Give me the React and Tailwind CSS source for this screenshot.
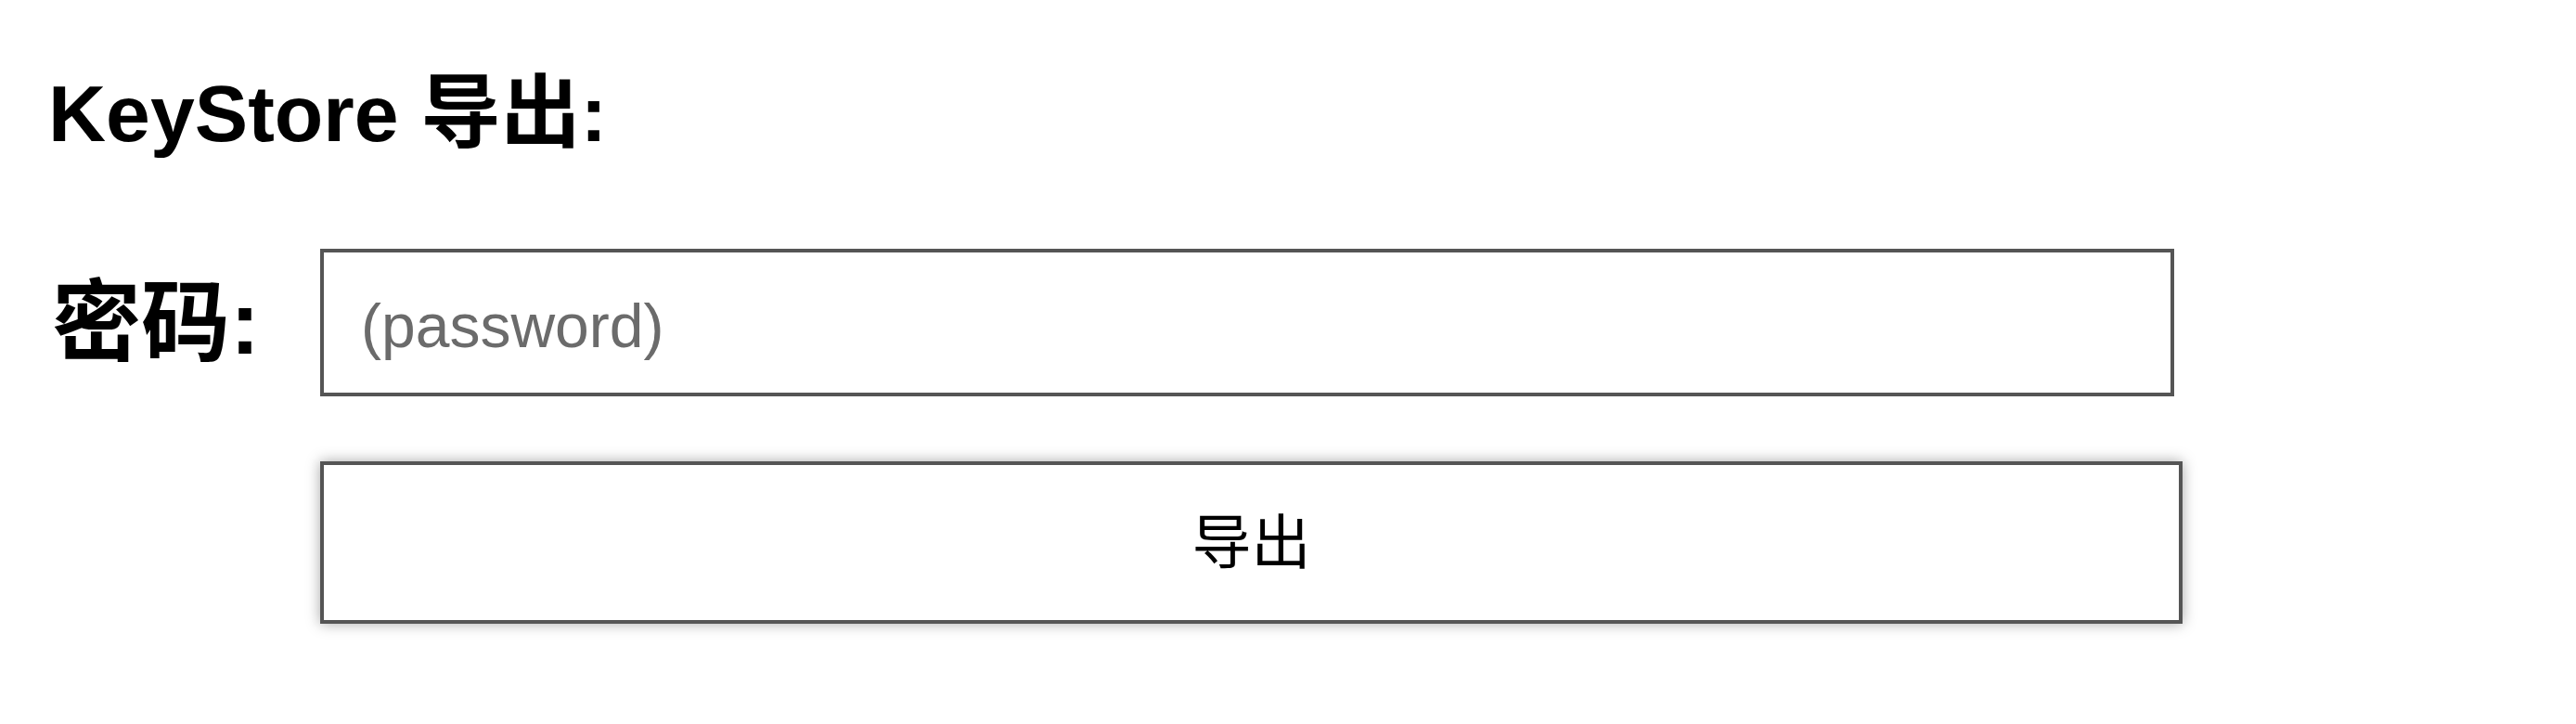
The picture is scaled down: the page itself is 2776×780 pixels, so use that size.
export default function App() {
  return (
    <div className="min-h-screen w-full bg-white text-black font-['Liberation_Sans','Noto_Sans_CJK_SC',sans-serif] pl-[52px] pt-[79px]">
      <h1 className="text-[86px] font-bold leading-none">KeyStore 导出:</h1>
      <div className="mt-[103px] flex items-center">
        <label className="w-[293px] pl-[4px] text-[96px] font-bold leading-none">密码:</label>
        <input
          type="password"
          placeholder="(password)"
          className="h-[159px] w-[1998px] border-4 border-[#555555] bg-white pl-[40px] pt-[6px] text-[66px] outline-none placeholder:text-[#6b6b6b]"
        />
      </div>
      <div className="mt-[70px] pl-[293px]">
        <button className="h-[175px] w-[2007px] border-4 border-[#555555] bg-white text-[64px] leading-none shadow-[0_0_14px_rgba(0,0,0,0.35)]">
          导出
        </button>
      </div>
    </div>
  );
}
